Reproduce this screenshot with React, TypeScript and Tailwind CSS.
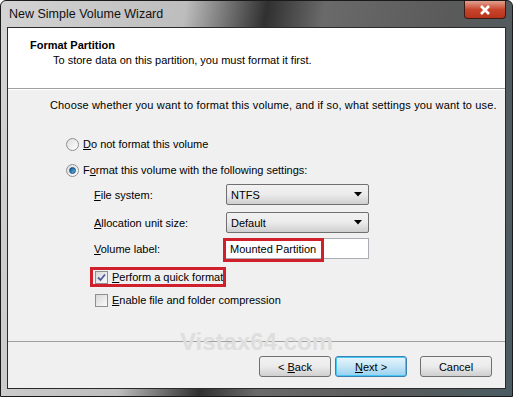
import React from "react";

const font = { fontFamily: '"Liberation Sans", Arial, sans-serif' };

function Radio({ checked }: { checked?: boolean }) {
  return (
    <span className="flex h-[13px] w-[13px] shrink-0 items-center justify-center rounded-full border border-[#8e8f8f] bg-gradient-to-br from-[#dedede] to-[#ffffff]">
      {checked && (
        <span className="h-[7px] w-[7px] rounded-full border border-[#1c4d78] bg-gradient-to-br from-[#0a4f8c] to-[#5cbcf0]" />
      )}
    </span>
  );
}

function Check({ checked }: { checked?: boolean }) {
  return (
    <span className="flex h-[13px] w-[13px] shrink-0 items-center justify-center border border-[#8e8f8f] bg-gradient-to-br from-[#d8d8d8] to-[#fbfbfb]">
      {checked && (
        <svg width="9" height="9" viewBox="0 0 9 9">
          <path d="M1 4.5 L3.5 7 L8 1.5" stroke="#4a5f97" strokeWidth="1.8" fill="none" />
        </svg>
      )}
    </span>
  );
}

function Combo({ value }: { value: string }) {
  return (
    <div className="flex h-[21px] w-[143px] items-center justify-between rounded-[2px] border border-[#707070] bg-gradient-to-b from-[#f2f2f2] via-[#ebebeb] to-[#cfcfcf] pl-[4px] pr-[6px]">
      <span>{value}</span>
      <svg width="8" height="5" viewBox="0 0 8 5">
        <path d="M0 0 L8 0 L4 4.5 Z" fill="#000" />
      </svg>
    </div>
  );
}

function Btn({ children, def }: { children: React.ReactNode; def?: boolean }) {
  return (
    <div
      className={
        "flex h-[21px] w-[72px] items-center justify-center whitespace-pre rounded-[3px] border " +
        (def
          ? "border-[#3c7fb1] bg-gradient-to-b from-[#e8f6fd] via-[#c4e5f6] to-[#98d1ef] shadow-[inset_0_0_0_1px_#48c6f5]"
          : "border-[#707070] bg-gradient-to-b from-[#f2f2f2] via-[#ebebeb] to-[#cfcfcf]")
      }
    >
      {children}
    </div>
  );
}

export default function App() {
  return (
    <div className="h-[397px] w-[513px] overflow-hidden text-[11px] leading-[14px] text-black" style={font}>
      <div className="flex h-[397px] w-[513px] flex-col rounded-t-[6px] border border-[#1a1a1a] bg-[linear-gradient(100deg,#d4d4d4_0%,#bdbdbd_32%,#303030_46%,#6a6a6a_56%,#5a5a5a_78%,#4a5c62_100%)]">
        {/* title bar */}
        <div className="flex h-[26px] items-start justify-between pl-[8px] pr-[6px]">
          <span className="mt-[6px] text-[12.5px] leading-[15px] text-[#111]">New Simple Volume Wizard</span>
          <div className="flex h-[18px] w-[42px] items-center justify-center rounded-b-[4px] border border-t-0 border-[#3b1a14] bg-gradient-to-b from-[#e0a090] via-[#c8442b] to-[#b8331c]">
            <svg width="12" height="10" viewBox="0 0 12 10">
              <path d="M2 1 L10 9 M10 1 L2 9" stroke="#fff" strokeWidth="2.6" />
            </svg>
          </div>
        </div>
        {/* client */}
        <div className="mx-[6px] flex flex-1 flex-col border border-[#2a2a2a] bg-[#f0f0f0]">
          <div className="flex h-[61px] flex-col border-b border-[#a0a0a0] bg-white pl-[22px] pt-[10px]">
            <span className="font-bold">Format Partition</span>
            <span className="mt-[1px] pl-[23px]">To store data on this partition, you must format it first.</span>
          </div>
          <div className="relative flex flex-1 flex-col border-t border-white pl-[42px] pt-[8px]">
            <span className="tracking-[0.15px]">Choose whether you want to format this volume, and if so, what settings you want to use.</span>
            <div className="mt-[25px] flex items-center gap-[4px] pl-[16px]">
              <Radio />
              <span>
                <u>D</u>o not format this volume
              </span>
            </div>
            <div className="mt-[12px] flex items-center gap-[4px] pl-[16px]">
              <Radio checked />
              <span>
                F<u>o</u>rmat this volume with the following settings:
              </span>
            </div>
            <div className="mt-[7px] flex items-center pl-[44px]">
              <span className="w-[132px]">
                <u>F</u>ile system:
              </span>
              <Combo value="NTFS" />
            </div>
            <div className="mt-[7px] flex items-center pl-[44px]">
              <span className="w-[132px]">
                <u>A</u>llocation unit size:
              </span>
              <Combo value="Default" />
            </div>
            <div className="mt-[5px] flex items-center pl-[44px]">
              <span className="w-[131px]">
                <u>V</u>olume label:
              </span>
              <div className="flex h-[21px] w-[144px] items-center border border-[#abadb3] bg-white pl-[4px]">
                <span className="relative">
                  Mounted Partition
                  <span className="absolute -bottom-[6px] -left-[7px] -right-[8px] -top-[4px] border-[3px] border-[#d0202c]" />
                </span>
              </div>
            </div>
            <div className="mt-[11px] flex pl-[45px]">
              <div className="relative flex items-center gap-[4px]">
                <Check checked />
                <span>
                  <u>P</u>erform a quick format
                </span>
                <span className="absolute -bottom-[3px] -left-[5px] -right-[3px] -top-[3px] border-[3px] border-[#d0202c]" />
              </div>
            </div>
            <div className="mt-[9px] flex items-center gap-[4px] pl-[45px]">
              <Check />
              <span>
                <u>E</u>nable file and folder compression
              </span>
            </div>
            <div
              className="absolute bottom-[-13px] left-[172px] text-[24px] font-bold leading-[24px] text-[#dedede]"
              style={{ fontFamily: '"Liberation Sans", Arial, sans-serif' }}
            >
              Vistax64.com
            </div>
          </div>
          <div className="flex h-[47px] items-start justify-end gap-[4px] border-t border-[#a0a0a0] pr-[13px] pt-[14px]">
            <Btn>
              {"< "}
              <u>B</u>ack
            </Btn>
            <Btn def>
              <u>N</u>ext {">"}
            </Btn>
            <div className="w-[5px]" />
            <Btn>Cancel</Btn>
          </div>
        </div>
        <div className="h-[7px]" />
      </div>
    </div>
  );
}
